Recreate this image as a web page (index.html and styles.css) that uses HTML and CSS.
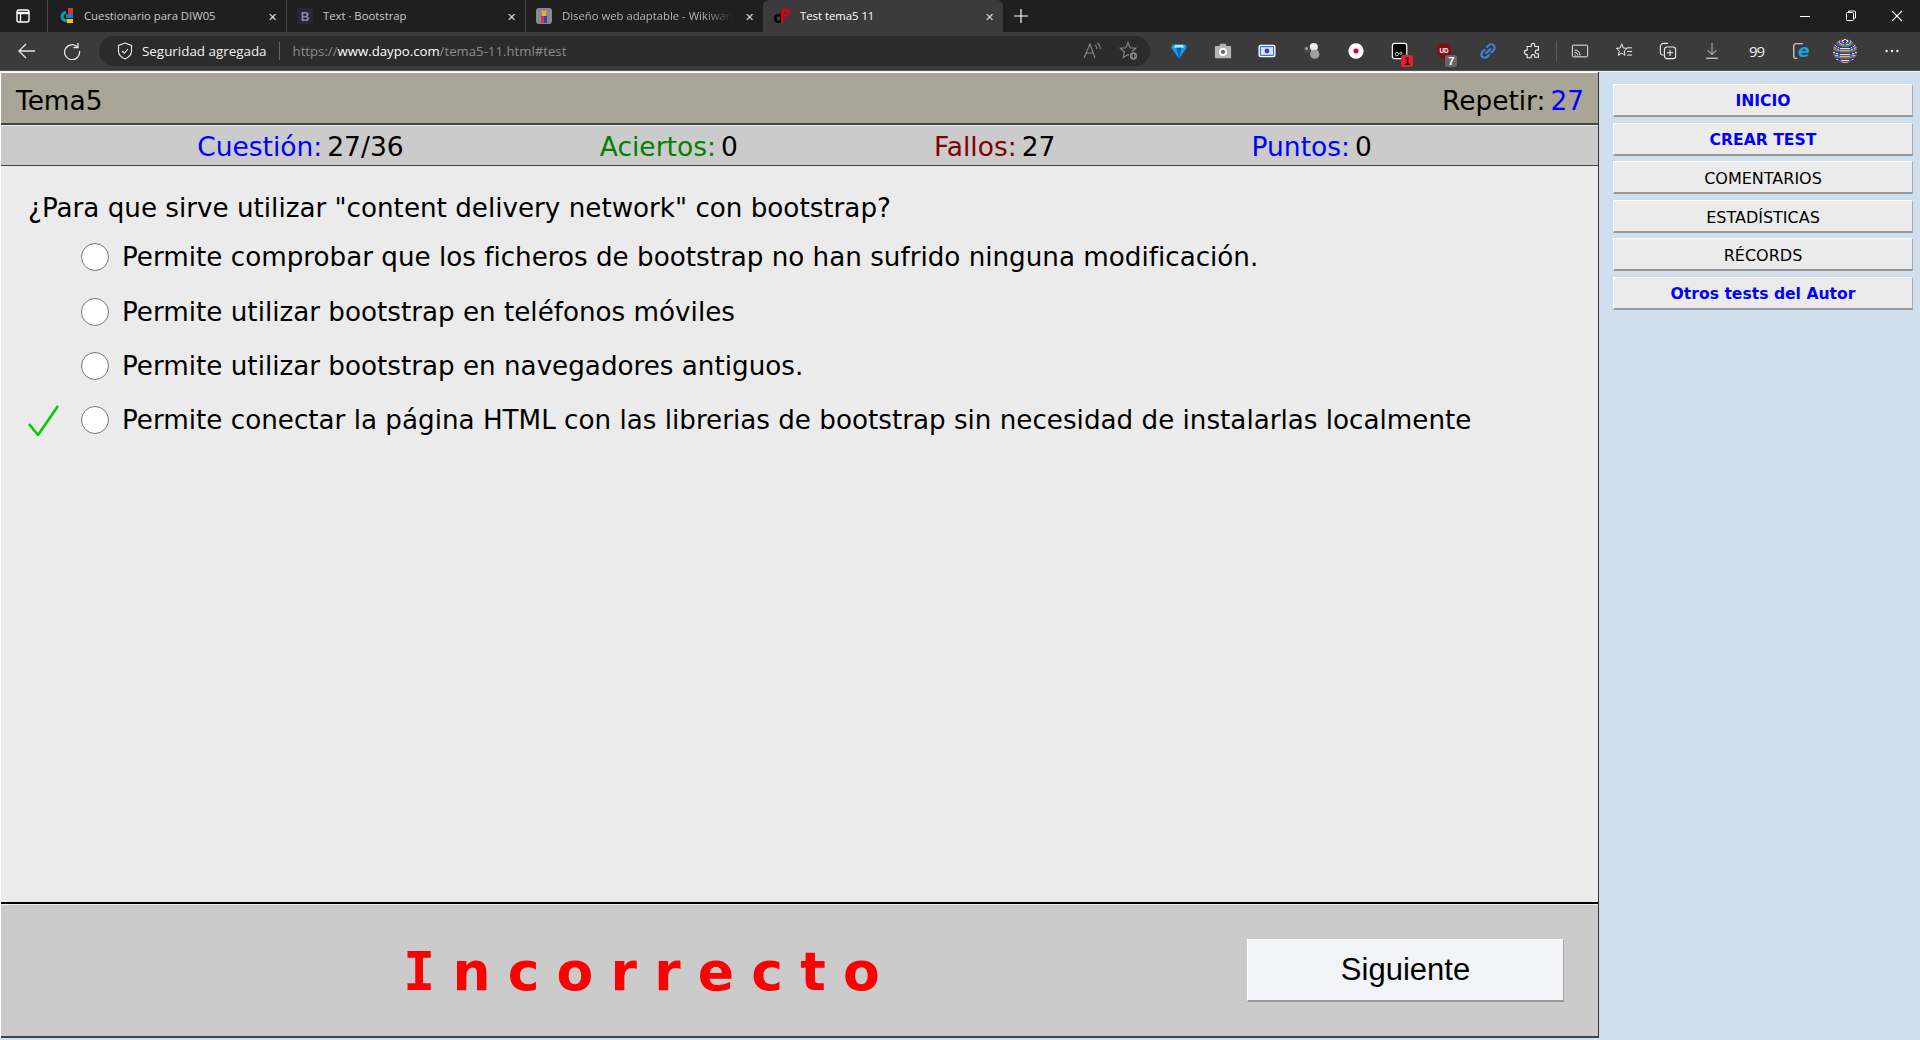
FILE: index.html
```html
<!DOCTYPE html>
<html lang="es">
  <head>
    <meta charset="UTF-8" />
    <title>Test tema5 11</title>
    <link rel="stylesheet" href="styles.css">
  </head>
  <body>
    <div id="tabstrip">
      <div class="tabmenu">
        <svg width="16" height="16" viewBox="0 0 16 16" fill="none" stroke="#fff" stroke-width="1.4"><rect x="2" y="2" width="12" height="12" rx="2"/><path d="M2 5h12" stroke-width="2.4"/><path d="M5.5 5v9"/></svg>
      </div>
      <div class="tab">
        <svg class="favicon" viewBox="0 0 16 16"><path d="M8 3a5.5 5.5 0 1 0 0 11h1v-3H8a2.5 2.5 0 0 1 0-5z" fill="#12a19a"/><path d="M10 0h5v6h-5z" fill="#d8352c"/><path d="M8 6h7v4H8z" fill="#2c6ecb"/><path d="M9 11h6v4H9z" fill="#f5c21b"/></svg>
        <span class="tabtitle">Cuestionario para DIW05</span>
        <span class="tabclose">✕</span>
      </div>
      <div class="tab">
        <svg class="favicon" viewBox="0 0 16 16"><rect width="16" height="16" rx="3" fill="#2b2438"/><text x="8" y="12.5" text-anchor="middle" class="favletter">B</text></svg>
        <span class="tabtitle">Text · Bootstrap</span>
        <span class="tabclose">✕</span>
      </div>
      <div class="tab tab-last">
        <svg class="favicon" viewBox="0 0 16 16"><rect width="16" height="16" rx="3" fill="#8d8a86"/><path d="M6 3h4v5H6z" fill="#e6b23c"/><path d="M5 8h3v7H5z" fill="#d12f6a"/><path d="M8 8h3v7H8z" fill="#3146b4"/></svg>
        <span class="tabtitle fade">Diseño web adaptable - Wikiwan</span>
        <span class="tabclose">✕</span>
      </div>
      <div class="tab tab-active">
        <svg class="favicon" viewBox="0 0 16 16" fill="none" stroke-width="2.4"><circle cx="4.5" cy="10.5" r="3.4" stroke="#000"/><path d="M7.6 14V4" stroke="#000"/><path d="M8 15V5" stroke="#e0000f"/><circle cx="11.5" cy="4.5" r="3.2" stroke="#e0000f"/></svg>
        <span class="tabtitle">Test tema5 11</span>
        <span class="tabclose">✕</span>
      </div>
      <div class="newtab">
        <svg width="14" height="14" viewBox="0 0 14 14" stroke="#fff" stroke-width="1.2"><path d="M7 0v14M0 7h14"/></svg>
      </div>
      <div class="winctrls">
        <svg width="46" height="12" viewBox="0 0 46 12" stroke="#fff"><path d="M18 6.5h10"/></svg>
        <svg width="46" height="12" viewBox="0 0 46 12" fill="none" stroke="#fff"><rect x="18.5" y="2.5" width="7" height="8" rx="1"/><path d="M20.5 2V1h6a1 1 0 0 1 1 1v6h-1.500"/></svg>
        <svg width="46" height="12" viewBox="0 0 46 12" stroke="#fff" stroke-width="1.1"><path d="M18 1l10 10M28 1L18 11"/></svg>
      </div>
    </div>

    <div id="toolbar">
      <svg class="navbtn back" viewBox="0 0 18 18" fill="none" stroke="#e6e6e6" stroke-width="1.3"><path d="M17 9H1M8 2L1 9l7 7"/></svg>
      <svg class="navbtn" viewBox="0 0 18 18" fill="none" stroke="#e6e6e6" stroke-width="1.3"><path d="M14.500 5A7.500 7.500 0 1 0 16.500 9"/><path d="M15 1v4.500h-4.500"/></svg>
      <div id="address">
        <svg class="shield" viewBox="0 0 16 18" fill="none" stroke="#eee" stroke-width="1.1"><path d="M8 1l6.500 2.500V9c0 4-3 6.500-6.500 8-3.500-1.500-6.500-4-6.500-8V3.500z"/><path d="M5 9l2.300 2.300L11 7"/></svg>
        <span class="secure">Seguridad agregada</span>
        <span class="addrsep"></span>
        <span class="url">https://<b>www.daypo.com</b>/tema5-11.html#test</span>
        <svg class="addricon aloud" viewBox="0 0 20 20" fill="none" stroke="#8a8a8a" stroke-width="1.1"><path d="M1 17L7 3l5 14M3.500 12h7"/><path d="M12 4a5 5 0 0 1 2 4M14.500 2a8 8 0 0 1 3 6"/></svg>
        <svg class="addricon" viewBox="0 0 20 20" fill="none" stroke="#8a8a8a" stroke-width="1.1"><path d="M9 1.500l2.200 5.200 5.600.5-4.200 3.800 1.200 5.500L9 13.700 4.200 16.500l1.200-5.500L1.200 7.200l5.600-.5z"/><circle cx="14.500" cy="15" r="4.200" fill="#8a8a8a" stroke="#2b2b2b"/><path d="M14.500 12.800v4.400M12.300 15h4.400" stroke="#2b2b2b"/></svg>
      </div>
      <div id="extensions">
        <span class="ext"><svg viewBox="0 0 20 20"><path d="M2.500 3h15l1 3.500L10 18.500 1.500 6.500z" fill="#1e9be8"/><path d="M5.500 3h9l1 3.500h-11z" fill="#a9e6ff"/><path d="M7 6.500h6l-3 12z" fill="#0a5fb4"/></svg></span>
        <span class="ext"><svg viewBox="0 0 20 20"><path d="M1 5.500q0-1 1-1h4l1-2.500h6l1 2.500h4q1 0 1 1V18H1z" fill="#b5b5b5"/><circle cx="10" cy="11" r="4.300" fill="#fff"/><circle cx="10" cy="11" r="2.400" fill="#666"/></svg></span>
        <span class="ext"><svg viewBox="0 0 20 20"><rect x=".5" y="3" width="19" height="14" rx="2.500" fill="#fff"/><rect x="2" y="4.500" width="16" height="11" rx="1.500" fill="#2f74e8"/><rect x="3.300" y="5.800" width="13.400" height="8.400" fill="#dfe6fb"/><circle cx="10" cy="10" r="2.700" fill="#3a3fd0"/></svg></span>
        <span class="ext"><svg viewBox="0 0 20 20"><circle cx="12" cy="5.500" r="4.500" fill="#ececec"/><circle cx="4.500" cy="8.500" r="3.800" fill="#4a4a4a"/><circle cx="4" cy="7.300" r="1.500" fill="#b0b0b0"/><circle cx="13" cy="13.500" r="5.200" fill="#a0a0a0"/></svg></span>
        <span class="ext"><svg viewBox="0 0 20 20"><circle cx="10" cy="10" r="8.500" fill="#fff"/><circle cx="10" cy="10" r="2.800" fill="#e3001b"/></svg></span>
        <span class="ext"><svg viewBox="0 0 20 20" fill="none"><rect x="1.500" y="1.500" width="16" height="17" rx="2.500" fill="#000" stroke="#fff" stroke-width="1.300"/><circle cx="6.500" cy="13.500" r="1.900" stroke="#ddd"/><circle cx="11" cy="12.500" r="1.300" stroke="#ddd"/></svg><span class="badge badge-red">1</span></span>
        <span class="ext"><svg viewBox="0 0 20 20"><path d="M10 1l8 2.500V10c0 4-3.500 7-8 9-4.500-2-8-5-8-9V3.500z" fill="#800f14"/><text x="10" y="12.500" text-anchor="middle" class="ublock">UD</text></svg><span class="badge badge-grey">7</span></span>
        <span class="ext"><svg viewBox="0 0 20 20" fill="none" stroke="#3d84e6" stroke-width="2.300" stroke-linecap="round"><path d="M8 12.500l4.500-4.500"/><path d="M9 5.500l2-2a3.700 3.700 0 0 1 5.300 5.300l-2.500 2.500"/><path d="M11 14.500l-2 2a3.700 3.700 0 0 1-5.300-5.300l2.500-2.500"/></svg></span>
        <span class="ext"><svg viewBox="0 0 20 20" fill="none" stroke="#eee" stroke-width="1.200"><path d="M8 3.500a2 2 0 0 1 4 0V5h4v4h-1.500a2 2 0 0 0 0 4H16v4h-4v-1a2 2 0 0 0-4 0v1.500H3.500V14H3a2.500 2.500 0 0 1 0-5h.5V5H8z"/></svg></span>
        <span class="extsep"></span>
        <span class="ext"><svg viewBox="0 0 20 20" fill="none" stroke="#eee" stroke-width="1.100"><rect x="1.500" y="3.500" width="17" height="13" rx="1"/><path d="M4 9a5.500 5.500 0 0 1 6 6M4 11.500a3 3 0 0 1 3.500 3.500M4 14a1 1 0 0 1 1 1"/></svg></span>
        <span class="ext"><svg viewBox="0 0 20 20" fill="none" stroke="#eee" stroke-width="1.100"><path d="M7.500 2l1.700 4.700 4.300.3-3.300 3 1 4.800-3.700-2.500-3.700 2.500 1-4.800L1.500 7l4.300-.3z"/><path d="M13.500 6.500H19M13.500 10.500H19M13.500 14.500H19"/></svg></span>
        <span class="ext"><svg viewBox="0 0 20 20" fill="none" stroke="#eee" stroke-width="1.200"><path d="M5 14.500H4a2.500 2.500 0 0 1-2.500-2.500V5A3.500 3.500 0 0 1 5 1.500h5"/><rect x="6" y="5.500" width="12.500" height="13" rx="3"/><path d="M12.200 8.500v7M8.700 12h7"/></svg></span>
        <span class="ext"><svg viewBox="0 0 20 20" fill="none" stroke="#aaa" stroke-width="1.200"><path d="M10 1v13M5 9l5 5 5-5"/><path d="M3.500 18h13" stroke="#eee"/></svg></span>
        <span class="ext ext-quote">99</span>
        <span class="ext"><svg viewBox="0 0 20 20" fill="none"><path d="M12 2H4a2 2 0 0 0-2 2v12a2 2 0 0 0 2 2h2" stroke="#eee" stroke-width="1.200"/><text x="13" y="17" text-anchor="middle" class="ielogo">e</text></svg></span>
        <span class="ext"><span class="avatar"></span></span>
        <span class="ext ext-dots">
          <svg viewBox="0 0 20 20" fill="#eee"><circle cx="4" cy="10" r="1.300"/><circle cx="10" cy="10" r="1.300"/><circle cx="16" cy="10" r="1.300"/></svg>
        </span>
      </div>
    </div>

    <div id="page">
      <div id="panel">
        <div id="title">
          <span>Tema5</span>
          <span>Repetir:<span class="blue sep">27</span></span>
        </div>
        <div id="stats">
          <span><span class="blue">Cuestión:</span><span class="sep">27/36</span></span>
          <span><span class="green">Aciertos:</span><span class="sep">0</span></span>
          <span><span class="darkred">Fallos:</span><span class="sep">27</span></span>
          <span><span class="blue">Puntos:</span><span class="sep">0</span></span>
        </div>
        <div id="question">
          <p class="pregunta">¿Para que sirve utilizar "content delivery network" con bootstrap?</p>
          <div class="opcion"><span class="marca"></span><span class="radio"></span>Permite comprobar que los ficheros de bootstrap no han sufrido ninguna modificación.</div>
          <div class="opcion"><span class="marca"></span><span class="radio"></span>Permite utilizar bootstrap en teléfonos móviles</div>
          <div class="opcion"><span class="marca"></span><span class="radio"></span>Permite utilizar bootstrap en navegadores antiguos.</div>
          <div class="opcion">
            <span class="marca"><svg width="31" height="31" viewBox="0 0 31 31" fill="none" stroke="#0c0" stroke-width="2.600"><path d="M1 19l9 11L30 1"/></svg></span>
            <span class="radio"></span>Permite conectar la página HTML con las librerias de bootstrap sin necesidad de instalarlas localmente
          </div>
        </div>
        <div id="footer">
          <span class="resultado"><span class="letra-i">I</span>ncorrecto</span>
          <button class="siguiente">Siguiente</button>
        </div>
      </div>
      <div id="sidebar">
        <a class="menu menu-strong">INICIO</a>
        <a class="menu menu-strong">CREAR TEST</a>
        <a class="menu">COMENTARIOS</a>
        <a class="menu">ESTADÍSTICAS</a>
        <a class="menu">RÉCORDS</a>
        <a class="menu menu-strong">Otros tests del Autor</a>
      </div>
    </div>
  </body>
</html>
```

FILE: styles.css
```css
html,
body {
  margin: 0;
  height: 100%;
  overflow: hidden;
}
body {
  background: #cfdfee;
  font-family: "DejaVu Sans", Verdana, sans-serif;
}

/* browser chrome */
#tabstrip {
  display: flex;
  align-items: flex-end;
  height: 32px;
  background: #1f1f1f;
  color: #eee;
  font-family: "Open Sans", "Liberation Sans", sans-serif;
  font-size: 11.300px;
}
.tabmenu {
  display: flex;
  justify-content: center;
  align-items: center;
  width: 47px;
  height: 32px;
  box-sizing: border-box;
  padding-right: 1px;
}
.tab {
  display: flex;
  align-items: center;
  box-sizing: border-box;
  width: 239px;
  height: 32px;
  padding: 0 9px 0 10px;
  border-left: 1px solid #4a4a4a;
  color: #c9c9c9;
}
.tab:first-of-type {
  color: #eee;
}
.tab-last {
  width: 238px;
}
.tab-active {
  width: 240px;
  padding-left: 11px;
  border-left: 0;
  border-radius: 6px 6px 0 0;
  background: #3b3b3b;
  color: #fff;
}
.favicon {
  width: 16px;
  height: 16px;
  margin-right: 10px;
  flex: none;
}
.favletter {
  fill: #8d8a9a;
  font-family: "Liberation Sans", sans-serif;
  font-size: 12px;
  font-weight: bold;
}
.tabtitle {
  flex: 1;
  padding-bottom: 2px;
  white-space: nowrap;
}
.fade {
  color: #b5b5b5;
  mask-image: linear-gradient(to right, #000 80%, transparent 98%);
}
.tabclose {
  margin-left: 8px;
  color: #ddd;
  font-size: 11px;
}
.newtab {
  display: flex;
  justify-content: center;
  align-items: center;
  width: 36px;
  height: 32px;
}
.winctrls {
  display: flex;
  align-items: center;
  height: 32px;
  margin-left: auto;
}

#toolbar {
  display: flex;
  align-items: center;
  height: 39px;
  background: #3b3b3b;
  border-bottom: 1px solid #555;
  box-sizing: border-box;
}
.navbtn {
  width: 18px;
  height: 18px;
  margin-left: 18px;
  margin-right: 7px;
  flex: none;
}
.back {
  margin-right: 9px;
}
#address {
  display: flex;
  align-items: center;
  box-sizing: border-box;
  width: 1051px;
  height: 30px;
  margin-left: 11px;
  padding: 0 11px 0 18px;
  border-radius: 15px;
  background: #2b2b2b;
  font-family: "Open Sans", "Liberation Sans", sans-serif;
  font-size: 13.400px;
}
.shield {
  width: 16px;
  height: 18px;
  margin-right: 9px;
}
.secure {
  color: #f2f2f2;
}
.addrsep {
  width: 1px;
  height: 18px;
  margin: 0 13px 0 12px;
  background: #666;
}
.url {
  flex: 1;
  color: #8c8c8c;
  font-size: 13.200px;
}
.url b {
  color: #fff;
  font-weight: normal;
}
.addricon {
  width: 20px;
  height: 20px;
  margin-left: 16px;
}
#extensions {
  display: flex;
  align-items: center;
  margin-left: 7px;
}
.ext {
  position: relative;
  display: flex;
  justify-content: center;
  align-items: center;
  width: 44.200px;
  height: 30px;
}
.ext svg {
  width: 18px;
  height: 18px;
}
.extsep {
  width: 1px;
  height: 20px;
  margin: 0 1px;
  background: #5c5c5c;
}
.ublock {
  fill: #fff;
  font-family: "Liberation Sans", sans-serif;
  font-size: 7px;
  font-weight: bold;
}
.ielogo {
  fill: #1ba1e2;
  font-family: "DejaVu Sans", sans-serif;
  font-size: 19px;
  font-style: italic;
  font-weight: bold;
}
.badge {
  position: absolute;
  right: 9px;
  bottom: -1px;
  min-width: 12px;
  height: 12px;
  border-radius: 2px;
  color: #fff;
  font-family: "Liberation Sans", sans-serif;
  font-size: 11px;
  font-weight: bold;
  line-height: 12px;
  text-align: center;
}
.badge-red {
  background: #e5202c;
  color: #111;
}
.badge-grey {
  background: #666;
}
.ext-quote {
  color: #eee;
  font-family: "Open Sans", sans-serif;
  font-size: 15px;
  letter-spacing: -1px;
  line-height: 30px;
}
.ext-dots {
  margin-left: 3px;
}
.avatar {
  width: 24px;
  height: 24px;
  border-radius: 50%;
  background: repeating-radial-gradient(ellipse 70% 45% at 50% 10%, #1c3fa8 0 2px, #e8e8d0 2px 3px, #7a3fb0 3px 5px, #e0c23c 5px 6px, #1fa06c 6px 8px, #c8403c 8px 9px);
}

/* daypo page */
#page {
  display: flex;
  height: 969px;
  border-top: 1px solid #eef2f5;
  box-sizing: border-box;
}
#panel {
  display: flex;
  flex-direction: column;
  box-sizing: border-box;
  width: 1599px;
  height: 966px;
  border-right: 1px solid #333;
  border-left: 1px solid #fff;
  color: #000;
}
#title {
  display: flex;
  justify-content: space-between;
  align-items: center;
  box-sizing: border-box;
  height: 53px;
  padding: 4px 14px 0 15px;
  border-top: 1px solid #fff;
  border-bottom: 2px solid #444;
  background: #a9a698;
  font-size: 26.400px;
}
#stats {
  display: flex;
  justify-content: space-evenly;
  align-items: center;
  box-sizing: border-box;
  height: 41px;
  padding: 2px 30px 0 0;
  border-top: 1px solid #eee;
  border-bottom: 1px solid #444;
  background: #cbcbcb;
  font-size: 26.500px;
}
.sep {
  margin-left: 5px;
}
.blue {
  color: #00f;
}
.green {
  color: #008000;
}
.darkred {
  color: #800000;
}
#question {
  flex: 1;
  padding: 0 0 0 27px;
  background: #ebebeb;
  font-size: 26.200px;
}
.pregunta {
  margin: 22px 0 0;
  line-height: 40px;
}
.opcion {
  display: flex;
  align-items: center;
  height: 54.400px;
}
.pregunta + .opcion {
  margin-top: 2px;
}
.marca {
  display: flex;
  width: 53px;
  height: 31px;
  flex: none;
}
.radio {
  box-sizing: border-box;
  width: 28px;
  height: 28px;
  margin-right: 13px;
  border: 1.500px solid #767676;
  border-radius: 50%;
  background: #fff;
  flex: none;
}
#footer {
  display: flex;
  align-items: center;
  box-sizing: border-box;
  height: 136px;
  padding: 0 34px 0 402px;
  border-top: 2px solid #000;
  border-bottom: 2px solid #444;
  background: #cbcbcb;
  box-shadow: inset 0 1px 0 #eee;
}
.resultado {
  margin-top: 2px;
  color: #f00;
  font-family: "DejaVu Sans", Verdana, sans-serif;
  font-size: 53.500px;
  font-weight: bold;
  letter-spacing: 17.200px;
}
.letra-i {
  font-family: "DejaVu Sans Mono", monospace;
}
.siguiente {
  width: 317px;
  height: 63px;
  margin-left: auto;
  border: 0;
  border-top: 1px solid #fff;
  border-left: 1px solid #fff;
  border-right: 1px solid #aaa;
  border-bottom: 2px solid #999;
  background: #f1f3f7;
  color: #000;
  font-family: "Liberation Sans", Arial, sans-serif;
  font-size: 31px;
}
#sidebar {
  display: flex;
  flex-direction: column;
  gap: 5.600px;
  width: 300px;
  padding: 12px 0 0 14px;
}
.menu {
  display: block;
  box-sizing: border-box;
  height: 33px;
  border: 1px solid;
  border-color: #fff #aaa #999 #fff;
  border-bottom-width: 2px;
  background: #ebebeb;
  color: #000;
  font-size: 16px;
  line-height: 33px;
  text-align: center;
}
.menu-strong {
  color: #00f;
  font-size: 15.600px;
  font-weight: bold;
}
```
